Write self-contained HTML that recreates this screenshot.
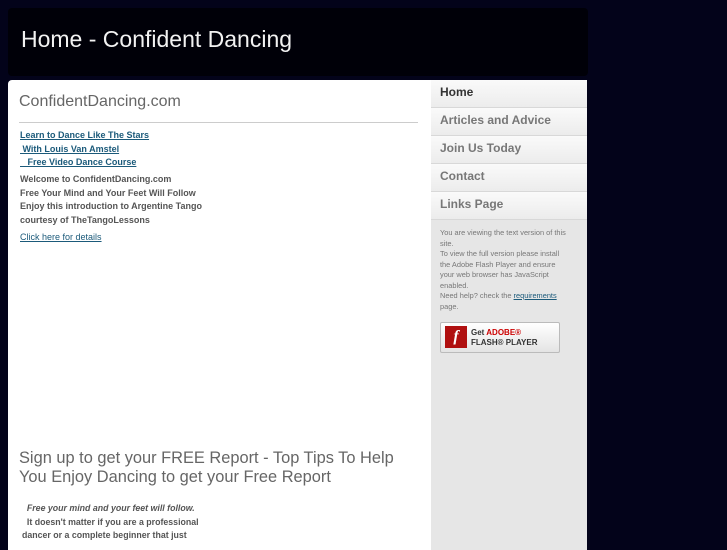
<!DOCTYPE html>
<html><head><style>
body{margin:0;background:#03031a;font-family:"Liberation Sans",sans-serif;width:727px;height:545px;overflow:hidden;position:relative}
#hdr{position:absolute;left:8px;top:8px;width:580px;height:68px;background:#000008;border-radius:4px}
#hdr h1{margin:0;position:absolute;left:13px;top:18px;font-weight:normal;color:#f2f2f2;font-size:23px}
#main{position:absolute;left:8px;top:80px;width:423px;height:470px;background:#fff;border-radius:4px 0 0 0}
#side{position:absolute;left:431px;top:80px;width:156px;height:470px;background:#e6e6e6;border-radius:0 4px 0 0}
.nav{height:27px;border-bottom:1px solid #d8d8d8;background:linear-gradient(#fafafa,#ececec);font-size:12px;font-weight:bold;color:#777;padding-left:9px;line-height:24px}
.nav.on{color:#333}
h2{position:absolute;left:11px;top:13px;margin:0;font-weight:normal;font-size:16px;color:#666}
hr{position:absolute;left:11px;width:399px;border:0;border-top:1px solid #ccc;margin:0;top:42px}
.t{position:absolute;left:12px;font-size:9px;font-weight:bold;color:#555;line-height:13.7px}
a{color:#1b5a7a;text-decoration:underline}
.sm{position:absolute;left:9px;top:148px;font-size:7.4px;color:#777;line-height:10.5px;width:128px}
#fl{position:absolute;left:9px;top:242px;width:118px;height:29px;background:linear-gradient(#fff,#e4e4e4);border:1px solid #bbb;border-radius:2px}
#fl .ic{position:absolute;left:4px;top:3px;width:22px;height:22px;background:#b01010;color:#fff;font:italic bold 16px "Liberation Serif",serif;text-align:center;line-height:22px}
#fl .tx{position:absolute;left:30px;top:5px;font-size:8px;font-weight:bold;color:#333;line-height:9.5px}
h3{position:absolute;left:11px;top:369px;margin:0;font-weight:normal;font-size:16.4px;color:#666;line-height:19px}
</style></head><body>
<div id="hdr"><h1>Home - Confident Dancing</h1></div>
<div id="main">
<h2>ConfidentDancing.com</h2><hr>
<div class="t" style="top:49px"><a>Learn to Dance Like The Stars</a><br><a>&nbsp;With Louis Van Amstel</a><br><a>&nbsp;&nbsp;&nbsp;Free Video Dance Course</a></div>
<div class="t" style="top:93px">Welcome to ConfidentDancing.com<br>Free Your Mind and Your Feet Will Follow<br>Enjoy this introduction to Argentine Tango<br>courtesy of TheTangoLessons</div>
<div class="t" style="top:151px;font-weight:normal"><a>Click here for details</a></div>
<h3>Sign up to get your FREE Report - Top Tips To Help<br>You Enjoy Dancing to get your Free Report</h3>
<div class="t" style="top:422px;left:14px;font-size:8.8px"><i>&nbsp;&nbsp;Free your mind and your feet will follow.</i><br>&nbsp;&nbsp;It doesn't matter if you are a professional<br>dancer or a complete beginner that just</div>
</div>
<div id="side">
<div class="nav on">Home</div><div class="nav">Articles and Advice</div><div class="nav">Join Us Today</div><div class="nav">Contact</div><div class="nav">Links Page</div>
<div class="sm">You are viewing the text version of this site.<br>To view the full version please install the Adobe Flash Player and ensure your web browser has JavaScript enabled.<br>Need help? check the <a>requirements</a> page.</div>
<div id="fl"><div class="ic">f</div><div class="tx">Get <span style="color:#c00">ADOBE®</span><br>FLASH® PLAYER</div></div>
</div>
</body></html>
